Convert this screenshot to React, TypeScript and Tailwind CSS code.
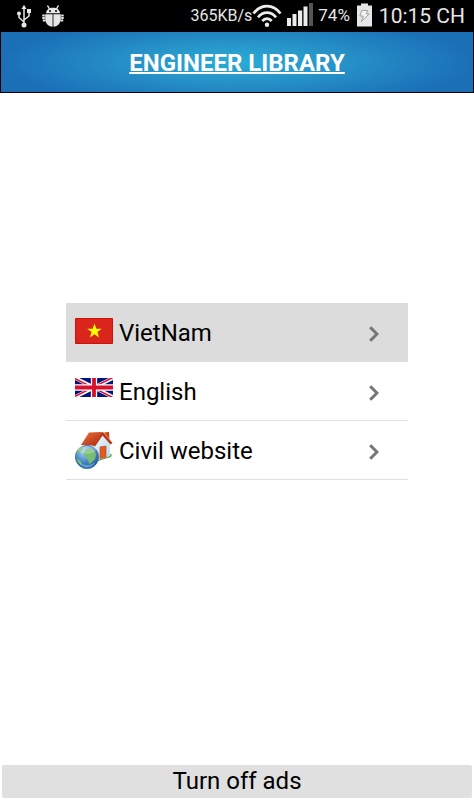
import React from 'react';

const UsbIcon: React.FC = () => (
  <svg viewBox="0 0 14 24" className="w-[14px] h-6" fill="none" stroke="#e6e6e6" strokeWidth="1.500" aria-hidden="true">
    <path d="M7 3v18M7 18L2 13.500V9.500M7 16l5-4V7" />
    <path d="M7 0.800l2.600 4.200H4.400z" fill="#e6e6e6" stroke="none" />
    <circle cx="2" cy="9.500" r="2" fill="#e6e6e6" stroke="none" />
    <path d="M10 5h4v4h-4z" fill="#e6e6e6" stroke="none" />
    <circle cx="7" cy="21" r="2.500" fill="#e6e6e6" stroke="none" />
  </svg>
);

const BugIcon: React.FC = () => (
  <svg viewBox="0 0 22 22" className="w-[22px] h-[22px]" aria-hidden="true">
    <g fill="#e6e6e6">
      <path d="M4 8.200C4.300 4.800 7 2.800 11 2.800s6.700 2 7 5.400z" />
      <path d="M3.200 9.200h7.400v12.600C6 21.400 3.200 18 3.200 14zM11.400 9.200h7.400V14c0 4-2.800 7.400-7.400 7.800z" />
    </g>
    <path d="M5.500 0.500l2 3.500M16.500 0.500l-2 3.500" stroke="#e6e6e6" strokeWidth="1.500" />
    <path d="M0.300 10.500h2.500M0.300 13h2.500M0.800 15.500h2.500M19.200 10.500h2.500M19.200 13h2.500M18.700 15.500h2.500" stroke="#e6e6e6" strokeWidth="1.800" />
    <circle cx="8" cy="6" r="1" fill="#000" />
    <circle cx="14" cy="6" r="1" fill="#000" />
  </svg>
);

const WifiIcon: React.FC = () => (
  <svg viewBox="0 0 30 24" className="w-[30px] h-6" fill="none" stroke="#ececec" strokeWidth="2.800" aria-hidden="true">
    <path d="M1.500 9.500C9-0.300 21-0.300 28.500 9.500M6 13.300c5-6.300 13-6.300 18 0M10.300 17c2.800-3.300 6.600-3.300 9.400 0" />
    <circle cx="15" cy="20.800" r="2.200" fill="#ececec" stroke="none" />
  </svg>
);

const SignalIcon: React.FC = () => (
  <svg viewBox="0 0 26 24" className="w-[26px] h-6" fill="#ececec" aria-hidden="true">
    <path d="M0 15h4v8H0zM5.500 11h4v12h-4zM11 7.500h4.200V23H11zM16.500 3.500h4V23h-4z" />
    <path d="M22 0h4v23h-4z" fill="#555" />
  </svg>
);

const BatteryIcon: React.FC = () => (
  <svg viewBox="0 0 15 24" className="w-[15px] h-6" aria-hidden="true">
    <path d="M4 0.500h7v2h4V23.500H0v-21h4z" fill="#e6e6e6" />
    <path d="M4.700 7.500h6L9.200 11h3L4.300 18.500l2-5.500H2.900z" fill="#f4f4f4" stroke="#999" strokeWidth="0.900" />
  </svg>
);

const VietnamFlag: React.FC = () => (
  <svg viewBox="0 0 38 26" className="w-[38px] h-[26px]" aria-hidden="true">
    <path d="M0.500 0.500h37v25h-37z" fill="#da251d" stroke="#d0100c" />
    <path d="M19.500 5.500l1.800 5.300h5.500l-4.400 3.300 1.700 5.400-4.600-3.300-4.600 3.300 1.700-5.400-4.400-3.300h5.500z" fill="#ff0" />
  </svg>
);

const BritishFlag: React.FC = () => (
  <svg viewBox="0 0 60 30" preserveAspectRatio="none" className="w-[38px] h-[19px]" aria-hidden="true">
    <path d="M0 0h60v30H0z" fill="#00137e" />
    <path d="M0 0l60 30M60 0L0 30" stroke="#fff" strokeWidth="6" />
    <path d="M0 0l30 15M60 30L30 15" stroke="#d8102c" strokeWidth="2.500" transform="translate(0 1)" />
    <path d="M60 0L30 15M0 30l30-15" stroke="#d8102c" strokeWidth="2.500" transform="translate(0 -1)" />
    <path d="M30 0v30M0 15h60" stroke="#fff" strokeWidth="10" />
    <path d="M30 0v30M0 15h60" stroke="#d8102c" strokeWidth="6" />
  </svg>
);

const HouseGlobe: React.FC = () => (
  <svg viewBox="0 0 38 40" className="w-[38px] h-10" aria-hidden="true">
    <defs>
      <linearGradient id="roof" x1="0" y1="0" x2="1" y2="1">
        <stop offset="0" stopColor="#ef7340" />
        <stop offset="1" stopColor="#a92708" />
      </linearGradient>
      <linearGradient id="wall" x1="0" y1="0" x2="1" y2="1">
        <stop offset="0" stopColor="#fff" />
        <stop offset="1" stopColor="#b5d8ee" />
      </linearGradient>
      <radialGradient id="globe" cx="0.4" cy="0.250" r="0.800">
        <stop offset="0" stopColor="#b9dcf5" />
        <stop offset="0.500" stopColor="#4e91cd" />
        <stop offset="1" stopColor="#1b4f91" />
      </radialGradient>
    </defs>
    <path d="M20 28l17-4-1 3-13 4z" fill="#62a043" />
    <path d="M9 14l11 1 7-11 8 9v13l-12 4-14-4z" fill="url(#wall)" />
    <path d="M25 17l6-1v11l-6 1.500z" fill="#e35a20" stroke="#b83b0d" strokeWidth="0.600" />
    <path d="M14 2.500L27 2l-8.500 13.500L6 15z" fill="url(#roof)" />
    <path d="M27 2l1.500 0.500L37.500 13l-2 1.500L27.500 5.500 20 16.500l-2-1z" fill="#bd3511" />
    <path d="M29 2.500l5-0.500 0.500 7" fill="#cb4315" />
    <circle cx="12" cy="27" r="11.600" fill="url(#globe)" stroke="#386da6" strokeWidth="0.800" />
    <path d="M10 20l4-2 5 2 2 4-1 5-4 4-2 1-1-5-3-2-2-4z" fill="#79bd72" />
    <path d="M2.500 20l3-3 3-0.500-1 3-3 3-2.500 1zM2 29l3 1 2 4-1 1c-2-1.500-3.500-3.500-4-6z" fill="#79bd72" />
    <path d="M4 32c4 4 12 4 16 0-2 7-13 8-16 0z" fill="#8ed0ef" opacity="0.500" />
    <ellipse cx="12" cy="20" rx="9" ry="4" fill="#fff" opacity="0.220" />
  </svg>
);

const Chevron: React.FC = () => (
  <svg viewBox="0 0 10 16" className="w-[10px] h-4" fill="none" stroke="#757575" strokeWidth="3" aria-hidden="true">
    <path d="M1.200 1.200L8 8l-6.800 6.800" />
  </svg>
);

const items = [
  { label: 'VietNam', icon: <VietnamFlag />, row: 'bg-[#dcdcdc]', iconBox: 'pb-0.5' },
  { label: 'English', icon: <BritishFlag />, row: 'bg-white', iconBox: 'pb-2' },
  { label: 'Civil website', icon: <HouseGlobe />, row: 'bg-white', iconBox: '' },
];

const StatusBar: React.FC = () => (
  <div className="flex h-[31px] items-center justify-between bg-black pl-[17px] pr-[9px] text-[#e6e6e6]">
    <div className="flex items-center gap-[11px]">
      <UsbIcon />
      <BugIcon />
    </div>
    <div className="flex items-center whitespace-nowrap">
      <span className="text-[16px]">365KB/s</span>
      <span><WifiIcon /></span>
      <span className="ml-[5px] pb-0.5"><SignalIcon /></span>
      <span className="ml-[5px] text-[17px]">74%</span>
      <span className="ml-[7px] pb-0.5"><BatteryIcon /></span>
      <span className="ml-[7px] pt-0.5 text-[21px]">10:15 CH</span>
    </div>
  </div>
);

const App: React.FC = () => (
  <div className="flex min-h-screen flex-col bg-white font-[Roboto,sans-serif] text-black">
    <StatusBar />
    <header className="flex h-[62px] items-center justify-center border border-black bg-[radial-gradient(ellipse_50%_75%_at_center,#29abd5_0%,#2898cb_35%,#1b6fb7_100%)] pt-0.5">
      <h1 className="text-2xl font-bold text-white underline decoration-2">ENGINEER LIBRARY</h1>
    </header>
    <main className="flex flex-1 flex-col justify-center px-[66px] pb-[75px]">
      <ul>
        {items.map((item) => (
          <li key={item.label}>
            <a href="#" className={`flex h-[59px] items-center border-b border-[#e0e0e0] pl-[9px] pr-[29px] ${item.row}`}>
              <span className={`w-[38px] ${item.iconBox}`}>{item.icon}</span>
              <span className="ml-[6px] flex-1 pt-0.5 text-2xl">{item.label}</span>
              <span className="pt-1"><Chevron /></span>
            </a>
          </li>
        ))}
      </ul>
    </main>
    <footer className="px-[2px] pb-[2px]">
      <button type="button" className="h-[33px] w-full rounded-xs bg-[#e0e0e0] pb-0.5 text-2xl leading-8">
        Turn off ads
      </button>
    </footer>
  </div>
);

export default App;
